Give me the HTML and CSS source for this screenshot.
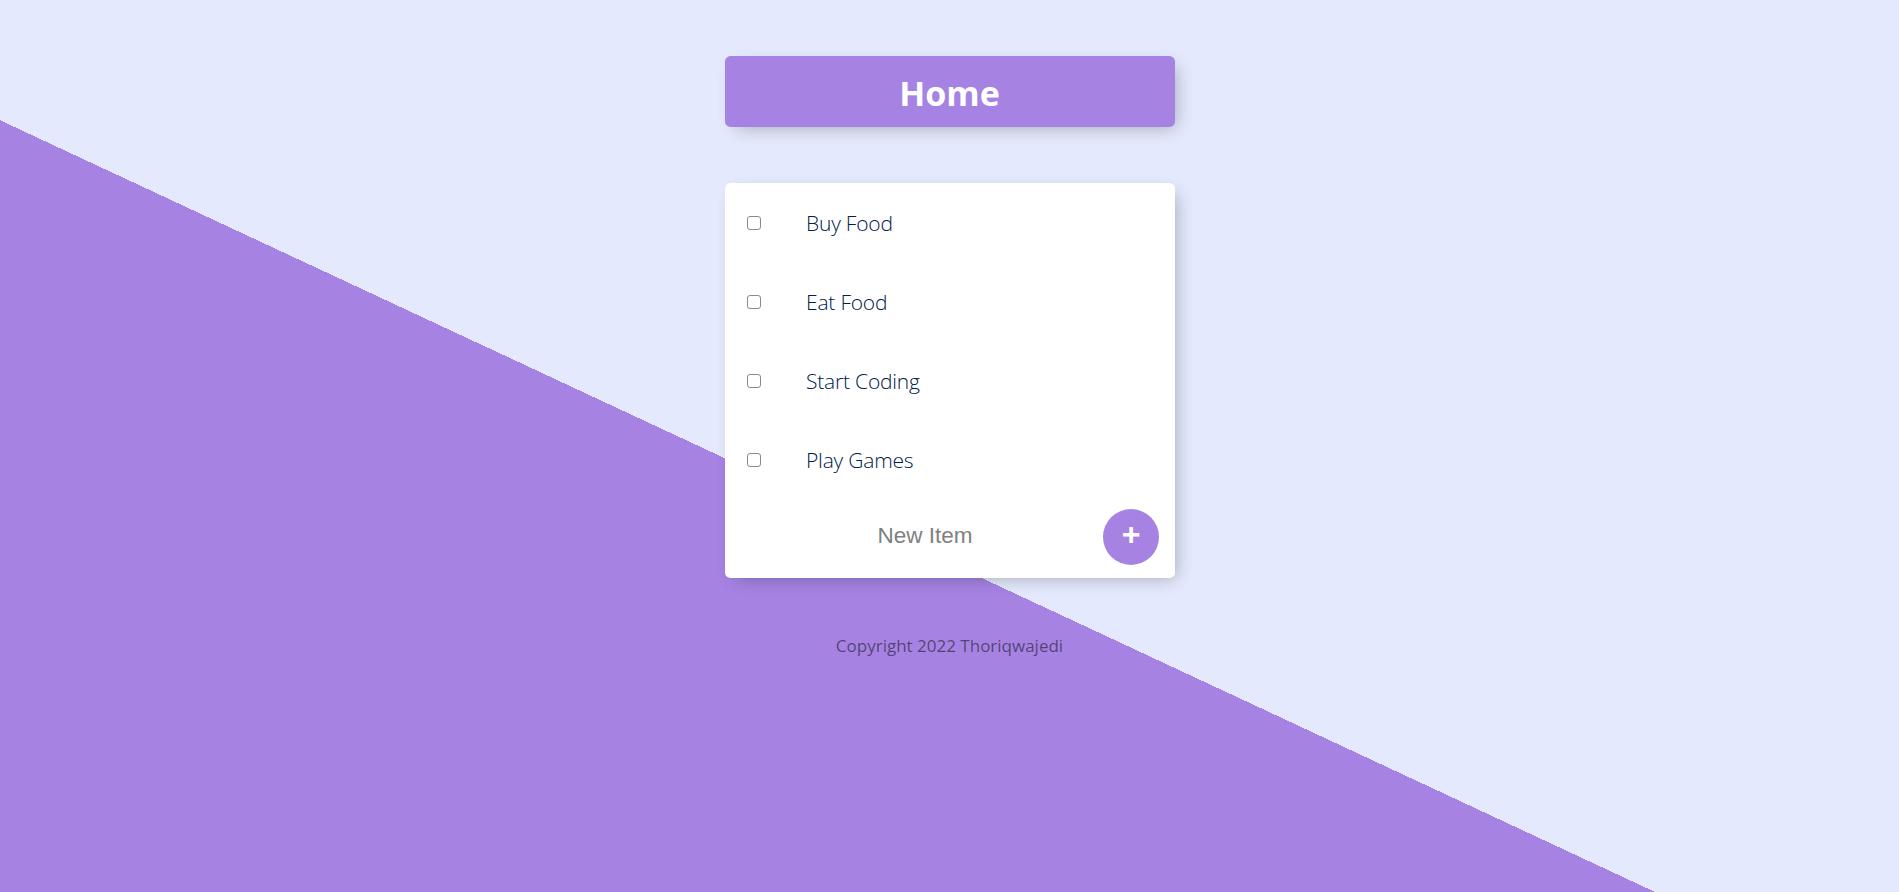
FILE: index.html
```html
<!DOCTYPE html>
<html lang="en">
<head>
<meta charset="utf-8">
<title>To Do List</title>
<link rel="stylesheet" href="styles.css">
</head>
<body>
  <div class="box heading">
    <h1>Home</h1>
  </div>
  <div class="box list">
    <div class="item"><input type="checkbox" class="check"><p>Buy Food</p></div>
    <div class="item"><input type="checkbox" class="check"><p>Eat Food</p></div>
    <div class="item"><input type="checkbox" class="check"><p>Start Coding</p></div>
    <div class="item"><input type="checkbox" class="check"><p>Play Games</p></div>
    <form class="item new-item">
      <input type="text" class="new-text" placeholder="New Item" autocomplete="off">
      <button type="button" class="add-btn">+</button>
    </form>
  </div>
  <footer class="footer">
    <p>Copyright 2022 Thoriqwajedi</p>
  </footer>
</body>
</html>
```

FILE: styles.css
```css
html {
  background-color: #E4E9FD;
  background-image: linear-gradient(25deg, #A683E3 50%, #E4E9FD 50%);
  background-size: 100% 1126px;
  background-repeat: no-repeat;
  min-height: 100%;
  font-family: "Open Sans", "Noto Sans", sans-serif;
  font-size: 18px;
}

body {
  margin: 0;
  padding-top: 1px;
}

.box {
  width: 450px;
  margin: 55px auto 56px;
  background: #fff;
  border-radius: 5.6px;
  box-shadow: 5.6px 5.6px 17px -5.6px rgba(0, 0, 0, 0.3);
}

.heading {
  background-color: #A683E3;
  text-align: center;
}

.heading h1 {
  margin: 0;
  padding: 13px 11px 9px;
  color: #fff;
  font-family: "Open Sans", "Noto Sans", sans-serif;
  font-weight: 700;
  font-size: 34px;
  line-height: 49px;
}

.item {
  min-height: 79px;
  display: flex;
  align-items: center;
}

.check {
  appearance: none;
  -webkit-appearance: none;
  box-sizing: border-box;
  width: 14px;
  height: 14px;
  margin: 0 22px 0 22.5px;
  border: 1px solid #8a8a8a;
  border-radius: 3px;
  background: #fff;
  flex: none;
}

.item p {
  margin: 0;
  padding: 0 22px 0 23px;
  font-size: 21px;
  font-weight: 300;
  color: #00204a;
  letter-spacing: -0.2px;
}

.new-item {
  min-height: 79px;
  padding-left: 22.5px;
}

.new-text {
  box-sizing: border-box;
  width: 356px;
  height: 67px;
  border: none;
  background: transparent;
  text-align: center;
  font-family: "Liberation Sans", Arial, sans-serif;
  font-size: 22.5px;
  padding: 0 2px;
  margin: -5px 0 0;
}

.new-text:focus {
  outline: none;
}

.new-text::placeholder {
  color: grey;
  opacity: 1;
}

.add-btn {
  box-sizing: border-box;
  width: 56px;
  height: 56px;
  margin: -4px 0 0;
  border: 0;
  border-radius: 50%;
  background-color: #A683E3;
  color: #fff;
  font-family: "Liberation Sans", Arial, sans-serif;
  font-weight: 700;
  font-size: 32px;
  line-height: 1;
  padding: 0 0 6px;
  flex: none;
}

.footer {
  text-align: center;
  color: rgba(0, 0, 0, 0.5);
}

.footer p {
  margin: 0;
  font-size: 17px;
  line-height: 24px;
}
```
